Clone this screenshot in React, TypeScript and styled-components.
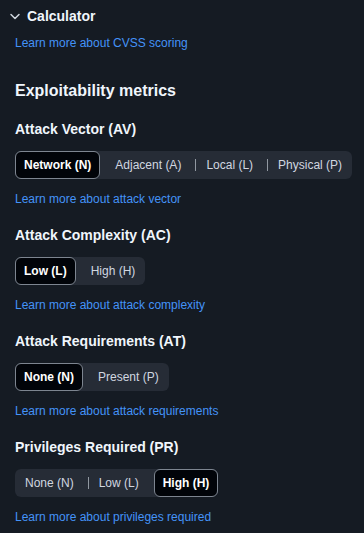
import * as React from 'react'
import styled, { createGlobalStyle } from 'styled-components'

const GlobalStyle = createGlobalStyle`
  html, body {
    margin: 0;
    padding: 0;
    height: 100%;
    background: #151b23;
  }
  body {
    font-family: "Liberation Sans", Arial, sans-serif;
    color: #f0f6fc;
    overflow: hidden;
  }
`

const Page = styled.div`
  display: flex;
  flex-direction: column;
  padding: 6px 15px 0 15px;
`

const Header = styled.div`
  display: flex;
  align-items: center;
  height: 20px;
  margin-left: -8px;
  gap: 4px;
`

const HeaderTitle = styled.h2`
  margin: 0;
  font-size: 14px;
  line-height: 20px;
  font-weight: 700;
  color: #f0f6fc;
`

const Chevron = styled.svg`
  width: 16px;
  height: 16px;
  color: #d1d7e0;
  flex-shrink: 0;
`

const LearnLink = styled.a<{ $top: number }>`
  display: block;
  margin-top: ${({ $top }) => $top}px;
  font-size: 12px;
  line-height: 18px;
  color: #4493f8;
  text-decoration: none;
  width: fit-content;
`

const GroupTitle = styled.h3`
  margin: 27px 0 0 0;
  font-size: 16px;
  line-height: 24px;
  font-weight: 700;
`

const Section = styled.section<{ $first?: boolean }>`
  display: flex;
  flex-direction: column;
  margin-top: ${({ $first }) => ($first ? 16 : 17)}px;
`

const MetricTitle = styled.h4`
  margin: 0 0 12px 0;
  font-size: 14px;
  line-height: 20px;
  font-weight: 700;
`

const Segmented = styled.div`
  display: inline-flex;
  align-self: flex-start;
  align-items: stretch;
  height: 28px;
  background: #262c36;
  border-radius: 6px;
`

const Segment = styled.button<{ $selected: boolean }>`
  display: flex;
  align-items: center;
  box-sizing: border-box;
  height: 28px;
  margin: 0;
  font-family: "Liberation Sans", Arial, sans-serif;
  font-size: 12px;
  white-space: nowrap;
  cursor: pointer;
  border-radius: 6px;
  font-weight: ${({ $selected }) => ($selected ? 700 : 400)};
  color: ${({ $selected }) => ($selected ? '#ffffff' : '#d1d7e0')};
  background: ${({ $selected }) => ($selected ? '#010409' : 'transparent')};
  border: ${({ $selected }) => ($selected ? '1px solid #7d8590' : '0')};
  padding: ${({ $selected }) => ($selected ? '0 8px' : '0 10px')};
`

const Separator = styled.span<{ $visible: boolean }>`
  box-sizing: border-box;
  width: 5px;
  height: 12px;
  align-self: center;
  border-right: 1px solid
    ${({ $visible }) => ($visible ? '#9198a1' : 'transparent')};
`

interface IMetric {
  title: string
  options: string[]
  selected: number
  link: string
}

const metrics: IMetric[] = [
  {
    title: 'Attack Vector (AV)',
    options: ['Network (N)', 'Adjacent (A)', 'Local (L)', 'Physical (P)'],
    selected: 0,
    link: 'Learn more about attack vector'
  },
  {
    title: 'Attack Complexity (AC)',
    options: ['Low (L)', 'High (H)'],
    selected: 0,
    link: 'Learn more about attack complexity'
  },
  {
    title: 'Attack Requirements (AT)',
    options: ['None (N)', 'Present (P)'],
    selected: 0,
    link: 'Learn more about attack requirements'
  },
  {
    title: 'Privileges Required (PR)',
    options: ['None (N)', 'Low (L)', 'High (H)'],
    selected: 2,
    link: 'Learn more about privileges required'
  }
]

const MetricControl = ({ options, selected }: { options: string[]; selected: number }) => (
  <Segmented role="group">
    {options.map((opt, i) => (
      <React.Fragment key={opt}>
        {i > 0 && <Separator $visible={i !== selected && i - 1 !== selected} />}
        <Segment $selected={i === selected} aria-pressed={i === selected}>
          {opt}
        </Segment>
      </React.Fragment>
    ))}
  </Segmented>
)

export default function App() {
  return (
    <>
      <GlobalStyle />
      <Page>
        <Header>
          <Chevron viewBox="0 0 16 16" fill="none">
            <polyline
              points="4,6.5 8,10.5 12,6.5"
              stroke="currentColor"
              strokeWidth="1.5"
              strokeLinecap="round"
              strokeLinejoin="round"
            />
          </Chevron>
          <HeaderTitle>Calculator</HeaderTitle>
        </Header>
        <LearnLink $top={8} href="#">
          Learn more about CVSS scoring
        </LearnLink>
        <GroupTitle>Exploitability metrics</GroupTitle>
        {metrics.map((m, i) => (
          <Section key={m.title} $first={i === 0}>
            <MetricTitle>{m.title}</MetricTitle>
            <MetricControl options={m.options} selected={m.selected} />
            <LearnLink $top={11} href="#">
              {m.link}
            </LearnLink>
          </Section>
        ))}
      </Page>
    </>
  )
}
